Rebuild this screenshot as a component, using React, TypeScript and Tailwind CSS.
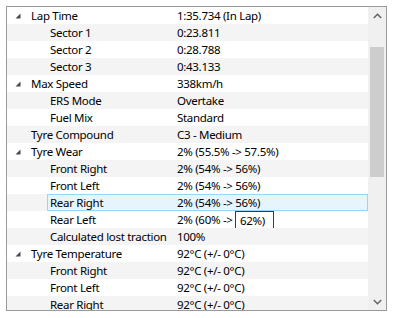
import React from "react";

type Row = {
  l: string;
  v: string;
  lvl: 0 | 1;
  exp?: boolean;
  sel?: boolean;
  tip?: boolean;
};

const rows: Row[] = [
  { l: "Lap Time", v: "1:35.734 (In Lap)", lvl: 0, exp: true },
  { l: "Sector 1", v: "0:23.811", lvl: 1 },
  { l: "Sector 2", v: "0:28.788", lvl: 1 },
  { l: "Sector 3", v: "0:43.133", lvl: 1 },
  { l: "Max Speed", v: "338km/h", lvl: 0, exp: true },
  { l: "ERS Mode", v: "Overtake", lvl: 1 },
  { l: "Fuel Mix", v: "Standard", lvl: 1 },
  { l: "Tyre Compound", v: "C3 - Medium", lvl: 0 },
  { l: "Tyre Wear", v: "2% (55.5% -> 57.5%)", lvl: 0, exp: true },
  { l: "Front Right", v: "2% (54% -> 56%)", lvl: 1 },
  { l: "Front Left", v: "2% (54% -> 56%)", lvl: 1 },
  { l: "Rear Right", v: "2% (54% -> 56%)", lvl: 1, sel: true },
  { l: "Rear Left", v: "2% (60% ->", lvl: 1, tip: true },
  { l: "Calculated lost traction", v: "100%", lvl: 1 },
  { l: "Tyre Temperature", v: "92°C (+/- 0°C)", lvl: 0, exp: true },
  { l: "Front Right", v: "92°C (+/- 0°C)", lvl: 1 },
  { l: "Front Left", v: "92°C (+/- 0°C)", lvl: 1 },
  { l: "Rear Right", v: "92°C (+/- 0°C)", lvl: 1 },
];

function Arrow() {
  return (
    <svg width="6" height="6" viewBox="0 0 6 6" className="block">
      <polygon points="5.5,0.5 5.5,5.5 0.5,5.5" fill="#4a4a4a" />
    </svg>
  );
}

function RowView({ r, i }: { r: Row; i: number }) {
  const gray = i % 2 === 1;
  return (
    <div
      className={`relative h-[17px] shrink-0 flex items-center ${gray ? "bg-[#f4f4f4]" : "bg-white"}`}
    >
      {r.sel && (
        <div className="absolute left-[40px] right-0 top-0 bottom-0 border border-[#9fd3f2] bg-[#e6f5fd]" />
      )}
      <div className="relative w-[170px] shrink-0 flex items-center h-full">
        {r.lvl === 0 ? (
          <>
            <div className="w-[24px] pl-[8px] flex items-center">{r.exp && <Arrow />}</div>
            <span className="whitespace-nowrap">{r.l}</span>
          </>
        ) : (
          <span className="pl-[43px] whitespace-nowrap">{r.l}</span>
        )}
      </div>
      <div className="relative flex-1 flex items-center h-full whitespace-nowrap">
        <span>{r.v}</span>
        {r.tip && (
          <span className="absolute left-[58px] top-0 w-[39px] h-[19px] pl-[4px] flex items-center border border-[#3a3a3a] bg-white whitespace-nowrap">
            62%)
          </span>
        )}
      </div>
    </div>
  );
}

export default function App() {
  return (
    <div
      className="w-[393px] h-[318px] bg-white pt-[6px] pl-[6px] text-black text-[11.5px] leading-none tracking-[-0.3px]"
      style={{ fontFamily: '"Noto Sans", "Open Sans", sans-serif' }}
    >
      <div className="w-[381px] h-[305px] border border-[#9a9a9a] flex overflow-hidden">
        <div className="w-[361px] flex flex-col overflow-hidden">
          {rows.map((r, i) => (
            <RowView key={i} r={r} i={i} />
          ))}
        </div>
        <div className="w-[18px] bg-[#f0f0f0] flex flex-col">
          <div className="h-[17px] flex items-center justify-center shrink-0">
            <svg width="9" height="6" viewBox="0 0 9 6">
              <polyline points="0.8,5 4.5,1.3 8.2,5" fill="none" stroke="#606060" strokeWidth="1.4" />
            </svg>
          </div>
          <div className="h-[23px] shrink-0" />
          <div className="h-[130px] mx-[2px] bg-[#cdcdcd] shrink-0" />
          <div className="flex-1" />
          <div className="h-[17px] flex items-center justify-center shrink-0">
            <svg width="9" height="6" viewBox="0 0 9 6">
              <polyline points="0.8,1 4.5,4.7 8.2,1" fill="none" stroke="#606060" strokeWidth="1.4" />
            </svg>
          </div>
        </div>
      </div>
    </div>
  );
}
